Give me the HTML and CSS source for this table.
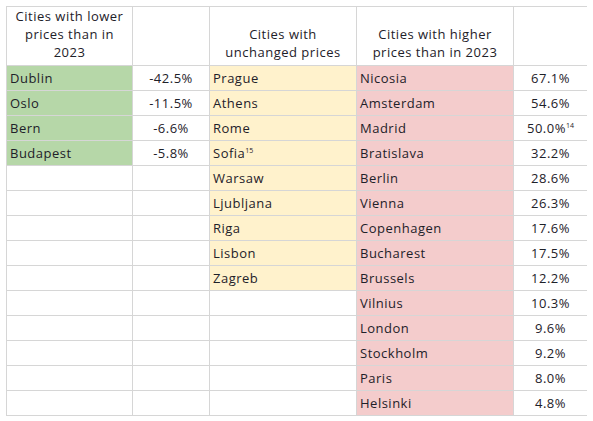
FILE: index.html
```html
<!DOCTYPE html>
<html lang="en">
  <head>
    <meta charset="UTF-8" />
    <meta name="viewport" content="width=device-width, initial-scale=1.0" />
    <title>City price changes compared with 2023</title>
    <link rel="stylesheet" href="styles.css">
  </head>
  <body>
    <!-- Price comparison table -->
    <table class="prices">
      <colgroup>
        <col class="c-city" />
        <col class="c-num" />
        <col class="c-same" />
        <col class="c-high" />
        <col class="c-num2" />
      </colgroup>
      <thead>
        <tr>
          <th>Cities with lower prices than in 2023</th>
          <th></th>
          <th>Cities with unchanged prices</th>
          <th>Cities with higher prices than in 2023</th>
          <th></th>
        </tr>
      </thead>
      <tbody>
        <tr><td class="low">Dublin</td><td class="num">-42.5%</td><td class="same">Prague</td><td class="high">Nicosia</td><td class="num">67.1%</td></tr>
        <tr><td class="low">Oslo</td><td class="num">-11.5%</td><td class="same">Athens</td><td class="high">Amsterdam</td><td class="num">54.6%</td></tr>
        <tr><td class="low">Bern</td><td class="num">-6.6%</td><td class="same">Rome</td><td class="high">Madrid</td><td class="num">50.0%<sup>14</sup></td></tr>
        <tr><td class="low">Budapest</td><td class="num">-5.8%</td><td class="same">Sofia<sup>15</sup></td><td class="high">Bratislava</td><td class="num">32.2%</td></tr>
        <tr><td></td><td></td><td class="same">Warsaw</td><td class="high">Berlin</td><td class="num">28.6%</td></tr>
        <tr><td></td><td></td><td class="same">Ljubljana</td><td class="high">Vienna</td><td class="num">26.3%</td></tr>
        <tr><td></td><td></td><td class="same">Riga</td><td class="high">Copenhagen</td><td class="num">17.6%</td></tr>
        <tr><td></td><td></td><td class="same">Lisbon</td><td class="high">Bucharest</td><td class="num">17.5%</td></tr>
        <tr><td></td><td></td><td class="same">Zagreb</td><td class="high">Brussels</td><td class="num">12.2%</td></tr>
        <tr><td></td><td></td><td></td><td class="high">Vilnius</td><td class="num">10.3%</td></tr>
        <tr><td></td><td></td><td></td><td class="high">London</td><td class="num">9.6%</td></tr>
        <tr><td></td><td></td><td></td><td class="high">Stockholm</td><td class="num">9.2%</td></tr>
        <tr><td></td><td></td><td></td><td class="high">Paris</td><td class="num">8.0%</td></tr>
        <tr><td></td><td></td><td></td><td class="high">Helsinki</td><td class="num">4.8%</td></tr>
      </tbody>
    </table>
  </body>
</html>
```

FILE: styles.css
```css
/* Page */
body {
  margin: 6px;
  background: #fff;
  font-family: "Open Sans", "Liberation Sans", sans-serif;
  font-size: 13px;
  letter-spacing: 0.5px;
  color: #1e2129;
}

/* Table grid */
.prices {
  border-collapse: collapse;
  table-layout: fixed;
  width: 582px;
}

.c-city { width: 126px; }
.c-num { width: 77px; }
.c-same { width: 147px; }
.c-high { width: 157px; }
.c-num2 { width: 74px; }

.prices th,
.prices td {
  border: 1px solid #d6d6d6;
  padding: 0 3px;
}

/* Header cells */
.prices th {
  height: 54px;
  font-weight: normal;
  text-align: center;
  vertical-align: bottom;
  line-height: 18px;
  padding: 0 4px 4px;
}

/* Body rows */
.prices td {
  height: 24px;
  line-height: 18px;
  white-space: nowrap;
}

.num {
  text-align: center;
}

.low { background: #b6d7a8; }
.same { background: #fff2cc; }
.high { background: #f4cccc; }

sup {
  font-size: 7px;
  letter-spacing: 0;
  line-height: 0;
  vertical-align: 5px;
}
```
